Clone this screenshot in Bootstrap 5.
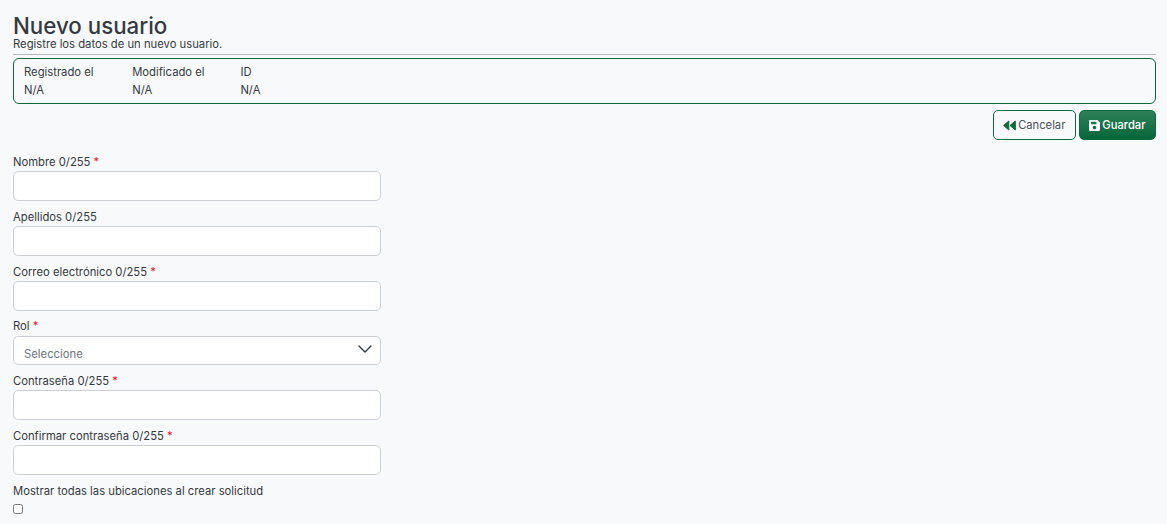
<!DOCTYPE html>
<html lang="es">

<head>
  <meta charset="UTF-8">
  <meta name="viewport" content="width=device-width, initial-scale=1.0">
  <title>Nuevo usuario</title>
  <link href="https://cdn.jsdelivr.net/npm/bootstrap@5.3.0/dist/css/bootstrap.min.css" rel="stylesheet">
  <style>
    body {
      background-color: #f8f9fb;
      color: #343a40;
      font-family: "Inter", "Noto Sans", sans-serif;
      font-size: 11.25px;
      line-height: 15px;
      overflow: hidden;
    }

    .page-wrap {
      padding: 13px 11px 0 13px;
    }

    .page-title {
      font-size: 22.3px;
      font-weight: 550;
      line-height: 25px;
      margin: 0;
      color: #343a40;
    }

    .page-sub {
      margin: 0 0 3px;
      line-height: 13px;
    }

    .title-rule {
      margin: 0 0 3px;
      border-top: 1px solid #b5b8ba;
      opacity: 1;
    }

    .info-box {
      border: 1px solid #0b6b3d;
      border-radius: 6px;
      height: 46px;
      padding: 4px 10px;
    }

    .info-col {
      width: 108.2px;
    }

    .info-col div {
      line-height: 18px;
    }

    .action-bar {
      margin-top: 6px;
      height: 30px;
      gap: 3px;
    }

    .btn-cancel,
    .btn-save {
      font-size: 11.2px;
      line-height: 14px;
      padding: 0 9.500px;
      height: 30px;
      border-radius: 5px;
      display: flex;
      align-items: center;
      gap: 2px;
    }

    .btn-cancel {
      background: #f8f9fb;
      border: 1px solid #0b6b3d;
      color: #495057;
    }

    .btn-save {
      background: linear-gradient(#2f8058, #07663a);
      border: 1px solid #0b6b3d;
      color: #fff;
      font-weight: 500;
    }

    .form-wrap {
      margin-top: 15px;
      width: 368px;
    }

    .field-group {
      height: 54.8px;
    }

    .field-label {
      display: block;
      margin: 0;
      height: 16px;
      line-height: 15px;
    }

    .req {
      color: #e5202e;
    }

    .field-input {
      height: 30px;
      min-height: 0;
      padding: 0 10px;
      font-size: 12px;
      border: 1px solid #ccd0d6;
      border-radius: 5px;
      background-color: #fff;
    }

    .field-select {
      height: 29px;
      margin-top: 1px;
      padding: 6px 10px 0;
      font-size: 11.3px;
      line-height: 18px;
      color: #6c757d;
      border: 1px solid #ccd0d6;
      border-radius: 5px;
      background-image: url("data:image/svg+xml,%3csvg xmlns='http://www.w3.org/2000/svg' viewBox='0 0 16 16'%3e%3cpath fill='none' stroke='%23343a40' stroke-linecap='round' stroke-linejoin='round' stroke-width='1.4' d='m2 5 6 6 6-6'/%3e%3c/svg%3e");
      background-position: right 7px top 4px;
      background-size: 16px 16px;
    }

    .check-label {
      height: 20px;
    }

    .check-box {
      width: 10px;
      height: 10px;
      margin: 0;
      display: block;
      border: 1px solid #6c757d;
      border-radius: 2px;
    }
  </style>
</head>

<body>
  <div class="page-wrap">
    <h1 class="page-title">Nuevo usuario</h1>
    <p class="page-sub">Registre los datos de un nuevo usuario.</p>
    <hr class="title-rule">

    <div class="info-box d-flex">
      <div class="info-col">
        <div>Registrado el</div>
        <div>N/A</div>
      </div>
      <div class="info-col">
        <div>Modificado el</div>
        <div>N/A</div>
      </div>
      <div class="info-col">
        <div>ID</div>
        <div>N/A</div>
      </div>
    </div>

    <div class="action-bar d-flex justify-content-end">
      <button type="button" class="btn btn-cancel">
        <svg width="13" height="11" viewBox="0 0 13 11" fill="#0b6b3d" stroke="#0b6b3d" stroke-width="1" stroke-linejoin="round">
          <path d="M.6 5.500 5.800 1V10z M7 5.500 12.300 1V10z"/>
        </svg>
        Cancelar
      </button>
      <button type="button" class="btn btn-save">
        <svg width="11" height="11" viewBox="0 0 11 11">
          <path fill="#fff" fill-rule="evenodd" d="M1.200 0H8.500L11 2.500V9.800A1.200 1.200 0 0 1 9.800 11H1.200A1.200 1.200 0 0 1 0 9.800V1.200A1.200 1.200 0 0 1 1.200 0ZM2 1.700V4.200H7.500V1.700ZM5.500 5.800A1.800 1.800 0 1 0 5.500 9.400 1.800 1.800 0 0 0 5.500 5.800Z"/>
        </svg>
        Guardar
      </button>
    </div>

    <form class="form-wrap">
      <div class="field-group">
        <label class="field-label">Nombre 0/255 <span class="req">*</span></label>
        <input type="text" class="form-control field-input">
      </div>
      <div class="field-group">
        <label class="field-label">Apellidos 0/255</label>
        <input type="text" class="form-control field-input">
      </div>
      <div class="field-group">
        <label class="field-label">Correo electrónico 0/255 <span class="req">*</span></label>
        <input type="email" class="form-control field-input">
      </div>
      <div class="field-group">
        <label class="field-label">Rol <span class="req">*</span></label>
        <select class="form-select field-select">
          <option>Seleccione</option>
        </select>
      </div>
      <div class="field-group">
        <label class="field-label">Contraseña 0/255 <span class="req">*</span></label>
        <input type="password" class="form-control field-input">
      </div>
      <div class="field-group">
        <label class="field-label">Confirmar contraseña 0/255 <span class="req">*</span></label>
        <input type="password" class="form-control field-input">
      </div>
      <div>
        <label class="field-label check-label">Mostrar todas las ubicaciones al crear solicitud</label>
        <input type="checkbox" class="check-box">
      </div>
    </form>
  </div>

  <script src="https://cdn.jsdelivr.net/npm/bootstrap@5.3.0/dist/js/bootstrap.bundle.min.js"></script>
</body>

</html>
